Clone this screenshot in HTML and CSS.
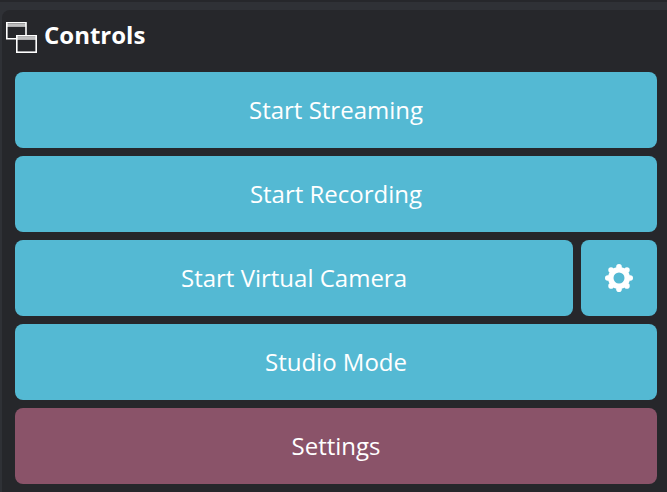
FILE: index.html
```html
<!DOCTYPE html>
<html lang="en">
<head>
    <meta charset="UTF-8">
    <meta name="viewport" content="width=device-width, initial-scale=1.0">
    <title>Controls</title>
    <link rel="stylesheet" href="styles.css">
</head>
<body>
    <div class="topbar"></div>
    <div class="panel">
        <div class="title">
            <svg class="title-icon" width="31" height="31" viewBox="0 0 31 31" fill="none" stroke="#fff" stroke-width="1.600">
                <path d="M10 16.800H.8V.8H20V13"/>
                <path d="M1 3.400H20" stroke-width="3" stroke-opacity=".7"/>
                <rect x="10.800" y="13.800" width="19.400" height="16.400"/>
                <path d="M11 16.400H30" stroke-width="3" stroke-opacity=".7"/>
            </svg>
            <span>Controls</span>
        </div>
        <div class="buttons">
            <button class="button">Start Streaming</button>
            <button class="button">Start Recording</button>
            <div class="row">
                <button class="button grow">Start Virtual Camera</button>
                <button class="button gear" aria-label="Virtual camera settings">
                    <svg width="28" height="28" viewBox="0 0 28 28" fill="#fff">
                        <circle cx="14" cy="14" r="8.250" fill="none" stroke="#fff" stroke-width="5.500"/>
                        <circle cx="14" cy="2.800" r="2.800"/>
                        <circle cx="14" cy="25.200" r="2.800"/>
                        <circle cx="2.800" cy="14" r="2.800"/>
                        <circle cx="25.200" cy="14" r="2.800"/>
                        <circle cx="6.080" cy="6.080" r="2.800"/>
                        <circle cx="21.920" cy="6.080" r="2.800"/>
                        <circle cx="6.080" cy="21.920" r="2.800"/>
                        <circle cx="21.920" cy="21.920" r="2.800"/>
                    </svg>
                </button>
            </div>
            <button class="button">Studio Mode</button>
            <button class="button settings">Settings</button>
        </div>
    </div>
</body>
</html>
```

FILE: styles.css
```css
body {
    margin: 0;
    height: 492px;
    overflow: hidden;
    background-color: #2f3136;
    font-family: "Open Sans", sans-serif;
    color: white;
}
.topbar {
    height: 2px;
    background-color: #26272b;
}
.panel {
    box-sizing: border-box;
    height: 482px;
    margin: 8px -10px 0 2px;
    padding: 0 20px 0 13px;
    background-color: #26272b;
    border-radius: 8px 8px 0 0;
}
.title {
    display: flex;
    align-items: center;
    gap: 7px;
    height: 62px;
    padding-bottom: 14px;
    box-sizing: border-box;
    margin-left: -9px;
    font-size: 24px;
    font-weight: bold;
}
.title-icon {
    margin-top: 7px;
}
.buttons {
    display: flex;
    flex-direction: column;
    gap: 8px;
}
.row {
    display: flex;
    gap: 8px;
}
.button {
    height: 76px;
    padding: 0 0 2px;
    border: none;
    border-radius: 8px;
    background-color: #54b9d3;
    color: white;
    font-family: inherit;
    font-size: 24px;
}
.grow {
    flex: 1;
}
.gear {
    display: flex;
    align-items: center;
    justify-content: center;
    width: 76px;
    padding: 0;
}
.settings {
    background-color: #8a5369;
}
```
